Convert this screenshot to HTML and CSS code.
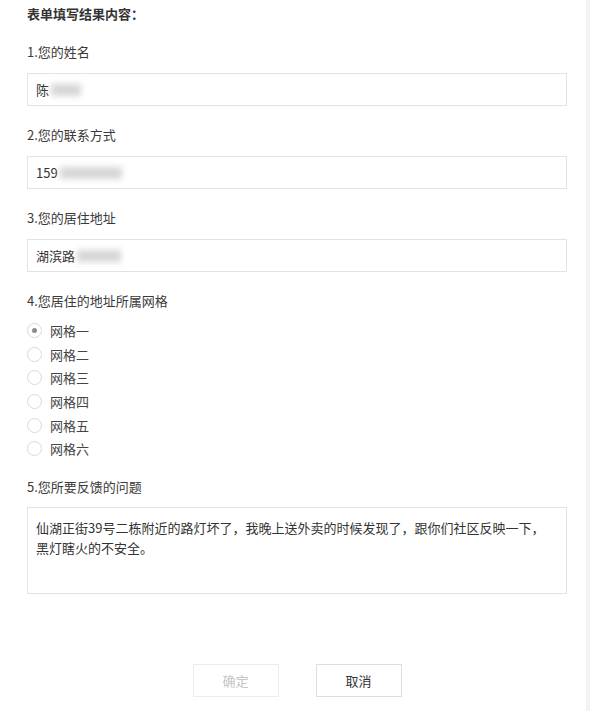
FILE: index.html
```html
<!DOCTYPE html>
<html lang="zh-CN">
<head>
<meta charset="utf-8">
<title>表单填写结果内容</title>
<link rel="stylesheet" href="styles.css">
</head>
<body>
<div class="edge"></div>
<main class="form">
  <h1 class="title">表单填写结果内容：</h1>

  <div class="label first">1.您的姓名</div>
  <div class="input">陈<span class="mask mask-name"></span></div>

  <div class="label">2.您的联系方式</div>
  <div class="input">159<span class="mask mask-phone"></span></div>

  <div class="label">3.您的居住地址</div>
  <div class="input">湖滨路<span class="mask mask-addr"></span></div>

  <div class="label q4">4.您居住的地址所属网格</div>
  <ul class="radios">
    <li class="radio checked"><span class="dot"></span>网格一</li>
    <li class="radio"><span class="dot"></span>网格二</li>
    <li class="radio"><span class="dot"></span>网格三</li>
    <li class="radio"><span class="dot"></span>网格四</li>
    <li class="radio"><span class="dot"></span>网格五</li>
    <li class="radio"><span class="dot"></span>网格六</li>
  </ul>

  <div class="label q5">5.您所要反馈的问题</div>
  <div class="textarea">仙湖正街39号二栋附近的路灯坏了，我晚上送外卖的时候发现了，跟你们社区反映一下，黑灯瞎火的不安全。</div>

  <div class="actions">
    <button class="btn disabled" type="button">确定</button>
    <button class="btn" type="button">取消</button>
  </div>
</main>
</body>
</html>
```

FILE: styles.css
```css
html, body {
  margin: 0;
  padding: 0;
  background: #fff;
}

body {
  font-family: "Noto Sans CJK SC", "Noto Sans", sans-serif;
  font-size: 13px;
  color: #333;
  position: relative;
  min-height: 711px;
}

.edge {
  position: absolute;
  top: 0;
  right: 0;
  width: 4px;
  height: 711px;
  background: #f3f3f3;
}

.form {
  width: 540px;
  padding: 4px 0 0 27px;
}

.title {
  margin: 0;
  font-size: 13px;
  font-weight: bold;
  line-height: 20px;
  color: #333;
}

.label {
  line-height: 20px;
  margin-top: 19px;
  margin-bottom: 11px;
  color: #3a3a3a;
}

.label.first {
  margin-top: 18px;
}

.label.q4 {
  margin-bottom: 8px;
}

.input {
  box-sizing: border-box;
  height: 33px;
  border: 1px solid #e3e3e3;
  padding: 0 8px;
  line-height: 31px;
  color: #333;
  display: flex;
  align-items: center;
}

.mask {
  display: inline-block;
  height: 12px;
  background: #d6d6d6;
  filter: blur(3px);
  margin-left: 2px;
}

.mask-name { width: 30px; }
.mask-phone { width: 62px; }
.mask-addr { width: 44px; }

.radios {
  list-style: none;
  margin: 0;
  padding: 0;
}

.radio {
  height: 23.6px;
  display: flex;
  align-items: center;
  color: #444;
}

.dot {
  box-sizing: border-box;
  width: 15px;
  height: 15px;
  border: 1px solid #d9d9d9;
  border-radius: 50%;
  margin-right: 8px;
  display: flex;
  align-items: center;
  justify-content: center;
}

.checked .dot::after {
  content: "";
  width: 5px;
  height: 5px;
  border-radius: 50%;
  background: #8c8c8c;
}

.label.q5 {
  margin-top: 16px;
  margin-bottom: 10px;
}

.textarea {
  box-sizing: border-box;
  height: 87px;
  border: 1px solid #e3e3e3;
  padding: 10px 20px 10px 8px;
  line-height: 20px;
  color: #333;
}

.actions {
  display: flex;
  justify-content: center;
  gap: 37px;
  margin-top: 70px;
}

.btn {
  box-sizing: border-box;
  width: 86px;
  height: 33px;
  border: 1px solid #dedede;
  background: #fff;
  font-family: inherit;
  font-size: 13px;
  color: #333;
  padding: 0;
}

.btn.disabled {
  color: #c4c4c4;
  border-color: #ececec;
}
```
